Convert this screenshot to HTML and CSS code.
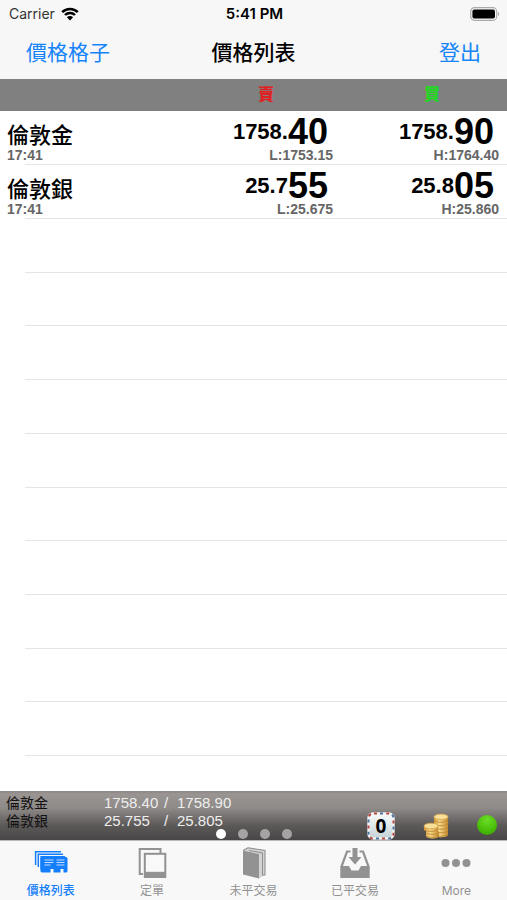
FILE: index.html
```html
<!DOCTYPE html>
<html lang="zh-Hant">
<head>
    <meta charset="UTF-8">
    <meta name="viewport" content="width=device-width, initial-scale=1.0">
    <title>價格列表</title>
    <link rel="stylesheet" href="styles.css">
</head>
<body>
    <div class="status-bar">
        <div class="carrier">
            Carrier
            <svg class="wifi" viewBox="0 0 18 14" width="18" height="14">
                <path d="M1.2 5.2a11 11 0 0 1 15.6 0M4 8a7 7 0 0 1 10 0" fill="none" stroke="#000" stroke-width="2.5"/>
                <path d="M9 13.4 5.9 10.2a4.4 4.4 0 0 1 6.2 0z"/>
            </svg>
        </div>
        <div class="clock">5:41 PM</div>
        <svg class="battery" viewBox="0 0 30 14" width="30" height="14">
            <rect x="0.7" y="0.7" width="26" height="12.6" rx="3.8" fill="#f7f7f7" stroke="#aaa" stroke-width="1.2"/>
            <rect x="2.4" y="2.4" width="22.6" height="9.2" rx="2"/>
            <path d="M28 4.8v4.4a2.6 2.6 0 0 0 0-4.4z" fill="#aaa"/>
        </svg>
    </div>

    <header class="nav-bar">
        <button class="nav-button" type="button">價格格子</button>
        <h1>價格列表</h1>
        <button class="nav-button nav-right" type="button">登出</button>
    </header>

    <main>
        <table class="prices">
            <thead>
                <tr>
                    <th class="name-col"></th>
                    <th class="sell">賣</th>
                    <th class="buy">買</th>
                </tr>
            </thead>
            <tbody>
                <tr>
                    <td><div class="name">倫敦金</div><div class="time">17:41</div></td>
                    <td><div class="price">1758.<b>40</b></div><div class="limit">L:1753.15</div></td>
                    <td><div class="price">1758.<b>90</b></div><div class="limit">H:1764.40</div></td>
                </tr>
                <tr>
                    <td><div class="name">倫敦銀</div><div class="time">17:41</div></td>
                    <td><div class="price">25.7<b>55</b></div><div class="limit">L:25.675</div></td>
                    <td><div class="price">25.8<b>05</b></div><div class="limit">H:25.860</div></td>
                </tr>
            </tbody>
        </table>
        <!-- empty rows below the prices -->
        <div class="empty-rows">
            <div></div><div></div><div></div><div></div><div></div>
            <div></div><div></div><div></div><div></div><div></div>
        </div>
    </main>

    <section class="ticker">
        <div class="quotes">
            <span class="quote-name">倫敦金</span><span>1758.40</span><span>/</span><span>1758.90</span>
            <span class="quote-name">倫敦銀</span><span>25.755</span><span>/</span><span>25.805</span>
        </div>
        <div class="tools">
            <button class="tool mail" type="button">
                <svg viewBox="0 0 28 28" width="28" height="28">
                    <defs>
                        <linearGradient id="paper" x1="0" y1="0" x2="0" y2="1">
                            <stop offset="0" stop-color="#f8fbfb"/>
                            <stop offset="1" stop-color="#c4d2d5"/>
                        </linearGradient>
                    </defs>
                    <rect x="1.5" y="1.5" width="25" height="25" rx="4.5" fill="url(#paper)" stroke="#f4f4f4" stroke-width="2.4"/>
                    <rect x="1.5" y="1.5" width="25" height="25" rx="4.5" fill="none" stroke="#b8463f" stroke-width="2" stroke-dasharray="3 9.2" stroke-dashoffset="-1"/>
                    <rect x="1.5" y="1.5" width="25" height="25" rx="4.5" fill="none" stroke="#4a72a0" stroke-width="2" stroke-dasharray="3 9.2" stroke-dashoffset="-7"/>
                </svg>
                <span class="count">0</span>
            </button>
            <button class="tool" type="button" aria-label="coins">
                <svg viewBox="0 0 28 28" width="28" height="28">
                    <defs>
                        <linearGradient id="gold" x1="0" y1="0" x2="1" y2="0">
                            <stop offset="0" stop-color="#d39a37"/>
                            <stop offset="0.4" stop-color="#f7d98a"/>
                            <stop offset="1" stop-color="#c48a2c"/>
                        </linearGradient>
                    </defs>
                    <path d="M12 5v18c0 3 14 3 14 0V5z" fill="url(#gold)"/>
                    <path d="M12 8c1 3 13 3 14 0M12 11.5c1 3 13 3 14 0M12 15c1 3 13 3 14 0M12 18.5c1 3 13 3 14 0M12 22c1 3 13 3 14 0" fill="none" stroke="#b98230" stroke-width="0.8"/>
                    <ellipse cx="19" cy="4.8" rx="7" ry="2.7" fill="#f8df9a" stroke="#d8a64c" stroke-width="0.8"/>
                    <path d="M2 14v4l2 1v5c0 3 13 3.5 13 0v-4l-1-1v-5z" fill="url(#gold)"/>
                    <path d="M2 17.5c1 2.5 13 2.5 14 0M4 20.5c1 2.5 12 2.5 13 0M4 23.5c1 2.5 12 2.5 13 0" fill="none" stroke="#b98230" stroke-width="0.8"/>
                    <ellipse cx="9" cy="14" rx="7" ry="2.8" fill="#f8df9a" stroke="#d8a64c" stroke-width="0.8"/>
                </svg>
            </button>
            <span class="online"></span>
        </div>
        <div class="pager"><i class="active"></i><i></i><i></i><i></i></div>
    </section>

    <nav class="tab-bar">
        <a class="tab active" href="#prices">
            <svg viewBox="0 0 34 32" width="34" height="32" fill="none" stroke="currentColor">
                <path d="M1.6 18V4.7H27M4.3 20V7.2H29" stroke-width="1.5"/>
                <path d="M7 22.5V9.700H31" stroke-width="1.3"/>
                <path d="M8 10h24q1.500 0 1.500 1.500V24q0 1.500-1.500 1.500h-2.500V22h-3v3.500h-7V22h-3v3.500h-7Q6.500 25.500 6.500 24V11.500Q6.500 10 8 10z" fill="currentColor" stroke="none"/>
                <path d="M10.500 13h9M10.500 15.500h9M10.500 18h6M22.500 13h8M22.500 15.500h8M22.500 18h8" stroke="#c7e0ff" stroke-width="1.1"/>
            </svg>
            <span>價格列表</span>
        </a>
        <a class="tab" href="#orders">
            <svg viewBox="0 0 34 32" width="34" height="32" fill="none" stroke="currentColor">
                <path d="M8 27H4.700V2H25.500V6" stroke-width="2"/>
                <rect x="9.800" y="6.800" width="20.500" height="23" fill="#f9f9f9" stroke-width="2"/>
                <path d="M9 24.800H31V31H9z" fill="currentColor" stroke="none"/>
            </svg>
            <span>定單</span>
        </a>
        <a class="tab" href="#open">
            <svg viewBox="0 0 34 32" width="34" height="32">
                <path d="M6 3.500 11 .5 28 3V28L22 31.500V7z" fill="#d4d4d4"/>
                <path d="M6 3.500 22 7V31.500L6 27.500z" fill="currentColor"/>
                <path d="M6 3.500 11 .8 28 3.500V28H25.500V6L12 3.500" fill="none" stroke="currentColor" stroke-width="1.1"/>
            </svg>
            <span>未平交易</span>
        </a>
        <a class="tab" href="#closed">
            <svg viewBox="0 0 34 32" width="34" height="32">
                <path d="M12.500 4.500H9L3.700 19v10.500h26.600V19L25 4.500h-3.500" fill="none" stroke="currentColor" stroke-width="2.200"/>
                <path d="M2.500 19H11l2.500 4.500h7L23 19h8.500v12h-29z" fill="currentColor"/>
                <path d="M14.500 1h5v9h4L17 17.500 10.500 10h4z" fill="currentColor"/>
            </svg>
            <span>已平交易</span>
        </a>
        <a class="tab" href="#more">
            <svg viewBox="0 0 34 32" width="34" height="32" fill="currentColor">
                <circle cx="6.500" cy="16" r="4"/>
                <circle cx="17" cy="16" r="4"/>
                <circle cx="27.500" cy="16" r="4"/>
            </svg>
            <span>More</span>
        </a>
    </nav>
</body>
</html>
```

FILE: styles.css
```css
* {
    box-sizing: border-box;
}

body {
    margin: 0;
    min-height: 100vh;
    display: flex;
    flex-direction: column;
    background: #fff;
    color: #000;
    font-family: "Liberation Sans", "Noto Sans CJK TC", sans-serif;
}

button {
    margin: 0;
    padding: 0;
    border: none;
    background: none;
    cursor: pointer;
}

.status-bar,
.nav-bar {
    display: grid;
    grid-template-columns: 1fr auto 1fr;
    align-items: center;
    background: #f7f7f7;
}

.status-bar {
    height: 27px;
    padding: 0 7px 0 9px;
    font-family: Inter, sans-serif;
    font-size: 14px;
    color: #333;
}

.carrier {
    display: flex;
    align-items: center;
    gap: 6px;
}

.clock {
    font-size: 15px;
    font-weight: 600;
    color: #000;
}

.battery {
    justify-self: end;
}

.nav-bar {
    height: 52px;
    padding: 0 26px 4px;
    font-family: "Noto Sans CJK TC", sans-serif;
}

.nav-bar h1 {
    margin: 0;
    font-size: 21px;
    font-weight: 500;
    line-height: 30px;
}

.nav-button {
    justify-self: start;
    font-family: inherit;
    font-size: 21px;
    line-height: 30px;
    color: #1584fb;
}

.nav-right {
    justify-self: end;
}

main {
    flex: 1;
    display: flex;
    flex-direction: column;
    padding-bottom: 35px;
}

/* price table */
.prices {
    width: 100%;
    border-collapse: collapse;
    table-layout: fixed;
}

.prices th {
    width: 166px;
    height: 32px;
    padding: 0 0 4px 16px;
    background: #808080;
    font-family: "Noto Sans CJK TC", sans-serif;
    font-size: 16px;
    font-weight: 900;
    line-height: 20px;
}

.prices .name-col {
    width: auto;
}

.prices .sell {
    color: #e02020;
}

.prices .buy {
    color: #22d822;
}

.prices tbody tr {
    background: linear-gradient(#e4e4e4, #e4e4e4) 25px 100% / 100% 1px no-repeat;
}

.prices td {
    height: 54px;
    padding: 5px 8px 0;
    vertical-align: top;
    text-align: right;
    font-weight: bold;
}

.prices td:first-child {
    padding-left: 7px;
    text-align: left;
}

.name {
    height: 32px;
    padding-top: 2px;
    font-family: "Noto Sans CJK TC", sans-serif;
    font-size: 22px;
    font-weight: 500;
    line-height: 30px;
}

.price {
    display: flex;
    align-items: center;
    justify-content: flex-end;
    height: 32px;
    padding-right: 5px;
    font-size: 22px;
}

.price b {
    font-size: 36px;
}

.time,
.limit {
    font-size: 14px;
    line-height: 14px;
    color: #666;
}

.empty-rows {
    flex: 1;
    display: grid;
    grid-auto-rows: 1fr;
    margin-left: 25px;
}

.empty-rows div {
    border-bottom: 1px solid #e4e4e4;
}

/* ticker strip above the tabs */
.ticker {
    position: relative;
    display: flex;
    justify-content: space-between;
    height: 49px;
    padding: 3px 10px 0 6px;
    background: linear-gradient(#8a8583, #9a9593 6%, #8e8a88 35%, #5c5959 70%, #484646);
}

.quotes {
    display: grid;
    grid-template-columns: 98px 60px 13px auto;
    grid-auto-rows: 18px;
    align-items: center;
    font-size: 15px;
    line-height: 18px;
    color: #eee;
}

.quote-name {
    font-size: 14px;
    color: #111;
}

.tools {
    display: flex;
    align-items: flex-end;
    gap: 27px;
}

.tool {
    position: relative;
    height: 28px;
}

.tool svg {
    display: block;
}

.count {
    position: absolute;
    inset: 0;
    font: bold 19px/28px "Open Sans", sans-serif;
    text-align: center;
    color: #000;
}

.online {
    width: 20px;
    height: 20px;
    margin-bottom: 5px;
    border-radius: 50%;
    background: radial-gradient(circle at 50% 25%, #6bdc26, #48bd08 60%, #339900);
}

.pager {
    position: absolute;
    right: 0;
    bottom: 1px;
    left: 0;
    display: flex;
    justify-content: center;
    gap: 12px;
}

.pager i {
    width: 10px;
    height: 10px;
    border-radius: 50%;
    background: #a5a3a3;
}

.pager .active {
    background: #fff;
}

/* tab bar */
.tab-bar {
    display: flex;
    height: 60px;
    border-top: 1px solid #b8b8b8;
    background: #f8f8f8;
}

.tab {
    flex: 1;
    display: flex;
    flex-direction: column;
    align-items: center;
    gap: 3px;
    padding-top: 6px;
    font-family: Inter, "Noto Sans CJK TC", sans-serif;
    font-size: 12px;
    line-height: 18px;
    color: #929292;
    text-decoration: none;
}

.tab.active {
    color: #147efb;
    font-weight: 500;
}
```
